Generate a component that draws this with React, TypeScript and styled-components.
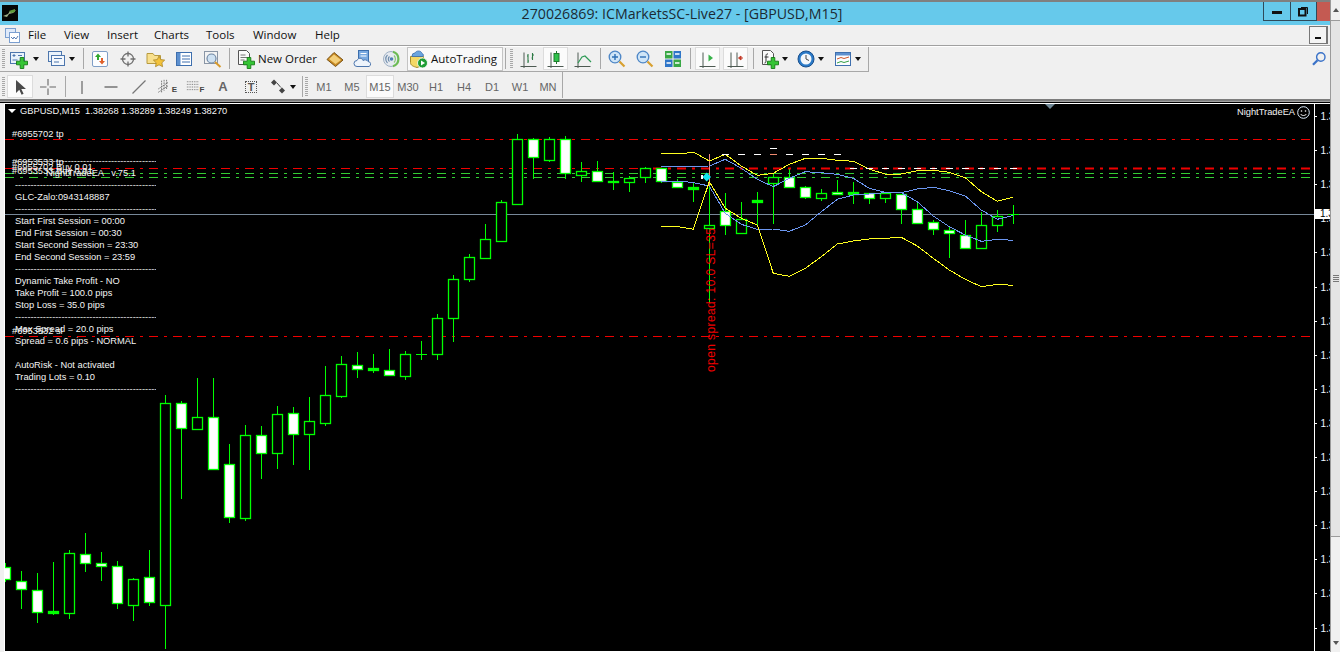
import React from "react";
import styled, { createGlobalStyle } from "styled-components";

const Global = createGlobalStyle`
  html, body { margin: 0; padding: 0; width: 1340px; height: 652px; overflow: hidden; background: #f0f0f0; }
  #root { width: 1340px; height: 652px; }
`;

const Page = styled.div`
  display: flex; width: 1340px; height: 652px; overflow: hidden;
  font-family: "Open Sans", "Liberation Sans", sans-serif;
`;
const Main = styled.div`
  width: 1330px; display: flex; flex-direction: column; background: #f0f0f0;
`;
const TitleBar = styled.div`
  height: 23px; border-top: 2px solid #808080; background: #66c9eb; display: flex; align-items: flex-start;
`;
const Logo = styled.svg`
  width: 16px; height: 16px; margin: 3px 0 0 2px; flex: none;
`;
const TitleText = styled.div`
  flex: 1; margin-left: 83px; text-align: center; font-size: 14.2px; line-height: 23px; color: #1c2a33; white-space: nowrap;
`;
const WinButtons = styled.div`
  display: flex; height: 19px; flex: none;
`;
const WinBtn = styled.div<{ $w: number }>`
  width: ${(p) => p.$w}px; box-sizing: border-box; border: 1px solid #2f4a5a; border-top: none; border-left-width: ${(p) => (p.$w > 27 ? 1 : 0)}px;
  display: flex; align-items: center; justify-content: center;
`;
const CloseBtn = styled.div`
  width: 13px; background: #c45a52;
`;
const MinGlyph = styled.div`
  width: 10px; height: 3px; background: #111; margin-top: 3px;
`;
const MenuBar = styled.div`
  height: 20px; display: flex; align-items: center; font-size: 11.5px; color: #111;
  border-bottom: 1px solid #a0a0a0; position: relative; box-shadow: 0 1px 0 #fff; z-index: 1;
`;
const MenuIcon = styled.svg`
  width: 15px; height: 15px; margin: 0 8px 0 5px; flex: none;
`;
const MenuItem = styled.span<{ $w: number }>`
  width: ${(p) => p.$w}px; flex: none; padding-bottom: 2px;
`;
const MdiMin = styled.div`
  margin-left: auto; margin-right: 2px; width: 19px; height: 18px; box-sizing: border-box;
  border: 1px solid #777; border-right-width: 2px; display: flex; align-items: flex-end; justify-content: center; padding-bottom: 4px; background: #f4f4f4;
`;
const MdiDash = styled.div`
  width: 6px; height: 2px; background: #111;
`;
const ToolRow = styled.div`
  height: 26px; display: flex; justify-content: space-between; align-items: stretch; flex: none;
`;
const Toolbar = styled.div<{ $line?: boolean; $top?: number }>`
  display: flex; align-items: center; border-right: 1px solid #a8a8a8; box-sizing: border-box;
  padding-top: ${(p) => p.$top ?? 0}px;
  border-bottom: ${(p) => (p.$line ? "1px solid #a8a8a8" : "none")};
`;
const Grip = styled.div`
  width: 3px; height: 19px; margin: 0 2px; flex: none;
  background: repeating-linear-gradient(to bottom, #a8a8a8 0 1px, #f0f0f0 1px 2px);
`;
const Sep = styled.div<{ $l?: number; $r?: number }>`
  width: 1px; height: 21px; background: #a8a8a8; flex: none;
  margin: 0 ${(p) => p.$r ?? 2}px 0 ${(p) => p.$l ?? 2}px;
`;
const Slot = styled.div<{ $w: number; $on?: boolean }>`
  width: ${(p) => p.$w}px; height: 23px; box-sizing: border-box; flex: none; display: flex; align-items: center; justify-content: center;
  background: ${(p) => (p.$on ? "#fbfbfb" : "transparent")};
  border: 1px solid ${(p) => (p.$on ? "#dcdcdc" : "transparent")};
`;
const Caret = styled.div`
  width: 10px; flex: none; display: flex; justify-content: center;
  &::after { content: ""; border: 3px solid transparent; border-top: 4px solid #111; border-bottom: 0; }
`;
const Gap = styled.div<{ $w: number }>`
  width: ${(p) => p.$w}px; flex: none;
`;
const LabelBtn = styled.div`
  width: 86px; display: flex; align-items: center; font-size: 11.5px; color: #111; flex: none; padding-left: 4px; box-sizing: border-box;
`;
const AutoBtn = styled.div`
  width: 96px; height: 24px; box-sizing: border-box; border: 1px solid #c4c4c4; background: #f9f9f9; display: flex; align-items: center;
  padding-left: 1px; font-size: 11.5px; color: #111; flex: none;
`;
const BtnText = styled.span`
  margin-left: 2px; white-space: nowrap;
`;
const Period = styled(Slot)`
  font-family: "Liberation Sans", sans-serif; font-size: 11px; color: #666;
`;
const ToolGlyph = styled.span<{ $size: number }>`
  font-family: "Liberation Sans", sans-serif; font-weight: bold; font-size: ${(p) => p.$size}px; color: #666; line-height: 1;
`;
const TBox = styled.span`
  width: 12px; height: 12px; box-sizing: border-box; border: 1px dotted #555; display: flex; align-items: center; justify-content: center;
  font-family: "Liberation Sans", sans-serif; font-weight: bold; font-size: 11px; color: #555;
`;
const SubTool = styled.span`
  display: flex; align-items: flex-end; font-family: "Liberation Sans", sans-serif; font-size: 8px; color: #444; font-weight: bold; line-height: 8px;
`;
const SearchBox = styled.div`
  display: flex; align-items: center; padding-right: 3px;
`;
const Band = styled.div`
  height: 5px; flex: none; background: linear-gradient(to bottom, #f0f0f0 0 1px, #7c7c7c 1px 3px, #a0a0a0 3px 4px, #000 4px 5px);
`;
const ChartWrap = styled.div`
  flex: 1; min-height: 0; margin-left: 4px; border-left: 1px solid #fff; border-top: 1px solid #fff; border-bottom: 1px solid #fff;
  background: #000; position: relative; overflow: hidden;
`;
const ChartSvg = styled.svg`
  display: block; width: 1325px; height: 547px;
`;
const chartFont = `"Liberation Sans", sans-serif`;
const ChartText = styled.div<{ $x: number; $y: number }>`
  position: absolute; left: ${(p) => p.$x - 5}px; top: ${(p) => p.$y - 104 - 6}px; color: #f4f4f4;
  font-family: ${chartFont}; font-size: 9.3px; line-height: 12px; white-space: pre;
`;
const InfoPanel = styled.div`
  position: absolute; left: 10px; top: 51px; width: 150px; color: #f4f4f4;
  font-family: ${chartFont}; font-size: 9.3px; line-height: 12px; white-space: pre;
`;
const InfoLine = styled.div`
  height: 12px; overflow: hidden;
`;
const Rule = styled.div`
  height: 12px; overflow: hidden; width: 141px; color: #e8e8e8;
`;
const HeaderCaret = styled.div`
  position: absolute; left: 3px; top: 5px; border: 4px solid transparent; border-top: 4px solid #fff; border-bottom: 0;
`;
const Notch = styled.div`
  position: absolute; left: 1040px; top: 0; border: 5px solid transparent; border-top: 5px solid #6f8796; border-bottom: 0;
`;
const Smiley = styled.svg`
  position: absolute; left: 1292px; top: 2px; width: 13px; height: 13px;
`;
const PriceBadge = styled.div`
  position: absolute; left: 1310px; top: 105px; width: 15px; height: 10px; background: #fff; color: #000; overflow: hidden;
  font-family: ${chartFont}; font-size: 10px; line-height: 10px; padding-left: 5px; box-sizing: border-box;
`;
const ScrollBar = styled.div`
  width: 10px; flex: none; box-sizing: border-box; border-left: 1px solid #9a9a9a; background: #f0f0f0; display: flex; flex-direction: column; align-items: stretch;
`;
const ScrollArrow = styled.div<{ $up?: boolean }>`
  height: ${(p) => (p.$up ? 20 : 18)}px; display: flex; justify-content: center; align-items: center; flex: none;
  &::after { content: ""; border: 3px solid transparent; ${(p) => (p.$up ? "border-bottom: 4px solid #555; border-top: 0;" : "border-top: 4px solid #555; border-bottom: 0;")} }
`;
const Thumb = styled.div`
  height: 517px; flex: none; box-sizing: border-box; background: #e4e4e4; border: 1px solid #9c9c9c; border-left: none; border-right: none;
  display: flex; align-items: center; justify-content: center;
`;
const ThumbGrip = styled.div`
  width: 6px; height: 7px; background: repeating-linear-gradient(to bottom, #777 0 1px, #e4e4e4 1px 2px);
`;
const Track = styled.div`
  flex: 1;
`;

/* ---------- icons ---------- */
const Ico = styled.svg<{ $s?: number }>`
  width: ${(p) => p.$s ?? 20}px; height: ${(p) => p.$s ?? 20}px; display: block; flex: none;
`;
const Plus = ({ x, y }: { x: number; y: number }) => (
  <path d={`M${x - 1.8} ${y - 5.5}h3.6v3.7h3.7v3.6h-3.7v3.7h-3.6v-3.7h-3.7v-3.6h3.7z`} fill="#35c535" stroke="#157a15" strokeWidth="0.9" />
);
const NewChart = () => (
  <Ico viewBox="0 0 20 20"><rect x="1.5" y="3.5" width="14" height="11" fill="#e9f2fb" stroke="#4d76ad" /><path d="M3.5 6.5h3M5 5v3M9 6.5h4M3.5 11h5" stroke="#4d76ad" /><Plus x={13} y={14} /></Ico>
);
const Profiles = () => (
  <Ico viewBox="0 0 20 20"><rect x="1.5" y="2.5" width="13" height="10" fill="#e9f2fb" stroke="#4d76ad" /><rect x="4.5" y="6.5" width="13" height="10" fill="#f4f8fd" stroke="#4d76ad" /><path d="M7 9.5h8M7 13h5" stroke="#4d76ad" /></Ico>
);
const MarketWatch = () => (
  <Ico viewBox="0 0 20 20"><rect x="2.5" y="2.5" width="15" height="15" rx="1.5" fill="#fcfdff" stroke="#7f9ec6" /><path d="M8 4.5l3 3.5H9v3H7V8H5z" fill="#2fa82f" /><path d="M12 15.5L9 12h2V9h2v3h2z" fill="#e0602a" /></Ico>
);
const Crosshair = () => (
  <Ico viewBox="0 0 20 20"><circle cx="10" cy="10" r="5.5" fill="none" stroke="#6e6e6e" strokeWidth="1.3" /><path d="M10 2.5v5M10 12.5v5M2.5 10h5M12.5 10h5" stroke="#6e6e6e" strokeWidth="1.3" /></Ico>
);
const Favorites = () => (
  <Ico viewBox="0 0 20 20"><path d="M1 4.5h6l1.5 2h6v8H1z" fill="#f8e08e" stroke="#b79a3f" /><path d="M13 7l1.8 3.6 3.9.5-2.8 2.7.7 3.9-3.6-1.9-3.5 1.9.7-3.9-2.8-2.7 3.9-.5z" fill="#f3c23a" stroke="#a9862a" strokeWidth="0.8" /></Ico>
);
const Navigator = () => (
  <Ico viewBox="0 0 20 20"><rect x="2.5" y="3.5" width="15" height="13" fill="#fff" stroke="#3e6fae" /><rect x="3" y="4" width="3.5" height="12" fill="#5d90cf" /><path d="M8 7h8M8 10h8M8 13h8" stroke="#3e6fae" /></Ico>
);
const Tester = () => (
  <Ico viewBox="0 0 20 20"><rect x="1.5" y="2.5" width="13" height="12" fill="#f3f3f3" stroke="#8a96a6" /><circle cx="8.5" cy="9.5" r="4.5" fill="#cfe2f3" stroke="#6f87a3" strokeWidth="1.2" /><path d="M12 13l5.5 5" stroke="#d89a2c" strokeWidth="2" /></Ico>
);
const NewOrder = () => (
  <Ico viewBox="0 0 20 20"><path d="M2.5 1.5h8l3 3v11h-11z" fill="#fbfbfb" stroke="#555" /><path d="M4.5 6h5M4.5 8.5h7M4.5 11h4" stroke="#777" /><Plus x={13} y={14} /></Ico>
);
const Book = () => (
  <Ico viewBox="0 0 20 20"><path d="M2 10.500L9 3.500l9 7.500-7.500 6.500z" fill="#c98a22" stroke="#7a5315" /><path d="M4 10l5-4.500 7 5.500-5.500 4z" fill="#f3cf7a" /></Ico>
);
const CloudDoc = () => (
  <Ico viewBox="0 0 20 20"><rect x="5.5" y="1.5" width="10" height="11" fill="#79a9e0" stroke="#3c6eac" /><path d="M7.5 4.5h6M7.5 7h6" stroke="#fff" /><path d="M4 17.5a3 3 0 0 1 0-6c1-3 5-3 6 0 1-1 4-1 5 1a2.6 2.6 0 0 1 1 5z" fill="#eef4fb" stroke="#4d76ad" /></Ico>
);
const Signal = () => (
  <Ico viewBox="0 0 20 20"><circle cx="10" cy="10" r="7.500" fill="#e6eaf0" stroke="#9fb0c4" /><path d="M6.500 14a5.500 5.500 0 0 1 0-8M8.500 12.500a3.200 3.200 0 0 1 0-5" fill="none" stroke="#6f8cab" strokeWidth="1.200" /><path d="M12 2.800a7.500 7.500 0 0 1 0 14.400" fill="none" stroke="#6dbb55" strokeWidth="2.200" /><path d="M13 6.500a5 5 0 0 1 0 7" fill="none" stroke="#8ac878" strokeWidth="1.200" /><circle cx="10.500" cy="10" r="1.800" fill="#4f7fb5" /></Ico>
);
const AutoIcon = () => (
  <Ico viewBox="0 0 20 20"><path d="M1.5 7.5h13v6c0 3-3 4-6.5 5-3.5-1-6.5-2-6.5-5z" fill="#f3d865" stroke="#a68c2c" /><path d="M3 7a3 3 0 0 1 3-3c1-2.500 6-3 7 .5a2 2 0 0 1 1 3H3z" fill="#6aa4de" stroke="#3c6eac" strokeWidth="0.8" /><circle cx="13.500" cy="14" r="5" fill="#1f9d35" stroke="#fff" strokeWidth="0.8" /><path d="M12 11.500l4 2.500-4 2.500z" fill="#fff" /></Ico>
);
const Axes = () => <path d="M5 3.500v15.500M1.500 17.500h16" stroke="#4d5a52" strokeWidth="1" fill="none" />;
const BarsIcon = () => (
  <Ico viewBox="0 0 20 20"><Axes /><path d="M9 5v9M8 7h1M9 12h1M13.500 4v7M13.500 6h1.500M12.500 9h1" stroke="#2d7a45" strokeWidth="1.100" fill="none" /></Ico>
);
const CandleIcon = () => (
  <Ico viewBox="0 0 20 20"><Axes /><path d="M10.500 2v13" stroke="#1f7a2e" /><rect x="8" y="4.500" width="5" height="8" fill="#2fc24a" stroke="#1f7a2e" /></Ico>
);
const LineIcon = () => (
  <Ico viewBox="0 0 20 20"><Axes /><path d="M5 14l4-6 3-1 3 3 3 3" stroke="#2d9a55" strokeWidth="1.200" fill="none" /></Ico>
);
const Zoomer = ({ plus }: { plus?: boolean }) => (
  <Ico viewBox="0 0 20 20"><circle cx="8" cy="8" r="5.800" fill="#cfe5f7" stroke="#4d86c6" strokeWidth="1.300" /><path d={plus ? "M5 8h6M8 5v6" : "M5 8h6"} stroke="#2d6fb5" strokeWidth="1.400" /><path d="M12.500 12.500l5 5" stroke="#d8a030" strokeWidth="2.200" /></Ico>
);
const Tile = () => (
  <Ico viewBox="0 0 20 20"><rect x="2" y="2" width="7.500" height="7.500" fill="#39a845" /><rect x="10.500" y="2" width="7.500" height="7.500" fill="#2f76c8" /><rect x="2" y="10.500" width="7.500" height="7.500" fill="#2f76c8" /><rect x="10.500" y="10.500" width="7.500" height="7.500" fill="#39a845" /><path d="M3.500 5h4.500M12 5h4.500M3.500 14h4.500M12 14h4.500" stroke="#fff" strokeWidth="1.500" /></Ico>
);
const AutoScroll = () => (
  <Ico viewBox="0 0 20 20"><Axes /><path d="M10.500 5.500l4.500 3.500-4.500 3.500z" fill="#37b34a" /></Ico>
);
const ShiftIcon = () => (
  <Ico viewBox="0 0 20 20"><Axes /><path d="M11 3.500v14" stroke="#4d5a52" /><path d="M17 9h-2M15 7l-2.500 2 2.500 2z" stroke="#c33a28" fill="#c33a28" /></Ico>
);
const Indicators = () => (
  <Ico viewBox="0 0 20 20"><path d="M2.500 1.500h8l3 3v11h-11z" fill="#fbfbfb" stroke="#555" /><path d="M8 5c-2-.5-2 1-2 3v4c0 1.500-.5 2-1.500 2M4.500 8h4" stroke="#333" fill="none" /><Plus x={13} y={14} /></Ico>
);
const ClockIcon = () => (
  <Ico viewBox="0 0 20 20"><circle cx="10" cy="10" r="8" fill="#2a7ac8" stroke="#1a4f8c" /><circle cx="10" cy="10" r="5.500" fill="#f3f7fb" /><path d="M10 6v4l3 1.500" stroke="#444" fill="none" /></Ico>
);
const Template = () => (
  <Ico viewBox="0 0 20 20"><rect x="2.500" y="3.500" width="15" height="13" fill="#fafcff" stroke="#3e6fae" /><rect x="3" y="4" width="14" height="2.500" fill="#5d90cf" /><path d="M4 10l4-1.500 3 1 5-1.500" stroke="#d0562a" fill="none" /><path d="M4 14l4-1.500 3 1 5-1.500" stroke="#37a045" fill="none" /></Ico>
);
const SearchIcon = () => (
  <Ico $s={16} viewBox="0 0 16 16"><circle cx="9.800" cy="6" r="4.200" fill="none" stroke="#3a72c8" strokeWidth="1.400" /><path d="M6.500 9.200L2 13.800" stroke="#3a72c8" strokeWidth="2.200" /></Ico>
);
const CursorIcon = () => (
  <Ico viewBox="0 0 20 20"><path d="M6 3v13l3.300-3.200 2.300 5 2-1-2.300-4.800H16z" fill="#4a4a4a" /></Ico>
);
const CrossThin = () => (
  <Ico viewBox="0 0 20 20"><path d="M10 2v6.500M10 11.500V18M2 10h6.500M11.500 10H18" stroke="#666" strokeWidth="1.100" /></Ico>
);
const VLine = () => (<Ico viewBox="0 0 20 20"><path d="M10 4v13" stroke="#666" strokeWidth="1.200" /></Ico>);
const HLine = () => (<Ico viewBox="0 0 20 20"><path d="M3.500 10h13" stroke="#555" strokeWidth="1.200" /></Ico>);
const Trend = () => (<Ico viewBox="0 0 20 20"><path d="M3.500 16.500L16.500 3.500" stroke="#777" strokeWidth="1.200" /></Ico>);
const Channels = () => (
  <Ico $s={15} viewBox="0 0 15 18"><path d="M0 12L12 4M0 16L12 8M4 2v14M7 1v13M10 1v12" stroke="#555" strokeWidth="0.900" strokeDasharray="2 1" /></Ico>
);
const Fibo = () => (
  <Ico $s={14} viewBox="0 0 14 16"><path d="M0 2h14M0 5h14M0 8h14M0 11h14" stroke="#666" strokeDasharray="1 1" /></Ico>
);
const ArrowsIcon = () => (
  <Ico viewBox="0 0 20 20"><path d="M6 2.500l3 3-3 3-3-3z" fill="#444" /><path d="M14 10.500l3 3-3 3-3-3z" fill="#444" /><path d="M9 6l3 3.500 1 1" stroke="#444" /></Ico>
);

/* ---------- chart data ---------- */
type Kind = "w" | "h" | "d" | "t";
const C: [number, number, number, number, Kind][] = [
  [563, 567, 579, 582, "w"], [571, 581, 589, 609, "w"], [573, 590, 612, 623, "w"], [562, 611, 613, 615, "d"],
  [550, 553, 613, 619, "h"], [533, 554, 563, 572, "w"], [552, 563, 566, 581, "w"], [561, 566, 603, 609, "w"],
  [578, 579, 605, 621, "h"], [550, 577, 602, 606, "w"], [395, 403, 605, 649, "h"], [401, 403, 428, 499, "w"],
  [378, 417, 429, 429, "h"], [378, 417, 469, 469, "w"], [444, 464, 517, 523, "w"], [425, 435, 518, 521, "h"],
  [426, 435, 453, 479, "w"], [406, 414, 453, 469, "h"], [407, 413, 434, 465, "w"], [397, 421, 434, 470, "h"],
  [366, 395, 423, 426, "h"], [356, 364, 396, 398, "h"], [352, 365, 369, 378, "w"], [354, 368, 370, 373, "d"],
  [349, 370, 375, 375, "w"], [351, 354, 376, 380, "h"], [341, 354, 354, 360, "t"], [314, 318, 354, 360, "h"],
  [275, 279, 318, 342, "h"], [254, 257, 279, 282, "h"], [224, 239, 258, 258, "h"], [200, 202, 241, 242, "h"],
  [134, 139, 204, 205, "h"], [138, 139, 157, 179, "w"], [137, 139, 160, 162, "h"], [136, 139, 173, 179, "w"],
  [162, 171, 175, 182, "h"], [161, 171, 181, 181, "w"], [172, 181, 182, 190, "d"], [176, 178, 182, 192, "h"],
  [167, 168, 177, 183, "h"], [168, 168, 181, 183, "w"], [179, 182, 187, 187, "w"], [182, 187, 189, 202, "d"],
  [186, 225, 228, 303, "h"], [193, 211, 225, 235, "w"], [202, 219, 233, 233, "h"], [192, 200, 202, 226, "d"],
  [173, 177, 183, 224, "h"], [169, 177, 187, 187, "w"], [186, 187, 197, 199, "w"], [189, 193, 198, 201, "h"],
  [180, 192, 194, 195, "w"], [182, 192, 194, 204, "d"], [193, 193, 198, 204, "w"], [192, 193, 198, 203, "h"],
  [194, 194, 209, 224, "w"], [202, 209, 223, 224, "w"], [220, 222, 229, 235, "w"], [226, 230, 233, 258, "w"],
  [220, 235, 248, 249, "w"], [212, 225, 248, 248, "h"], [210, 216, 225, 232, "h"], [205, 214, 214, 224, "t"],
];
const zoomPts = (a: number[][]) => a.map(([x, y]) => `${(640 + x / 3).toFixed(1)},${(130 + y / 3).toFixed(1)}`).join(" ");
const yellowUp = zoomPts([[63,70],[135,70],[160,66],[208,93],[256,73],[304,108],[352,136],[400,130],[448,103],[496,85],[544,85],[592,91],[640,94],[688,118],[736,132],[784,132],[832,122],[880,121],[928,127],[976,143],[1024,185],[1072,214],[1118,202]]);
const yellowLow = zoomPts([[63,289],[120,291],[160,298],[208,155],[256,235],[304,265],[352,285],[400,430],[448,439],[496,415],[544,380],[592,342],[640,333],[688,327],[736,325],[784,322],[832,348],[880,385],[928,420],[976,448],[1024,470],[1072,463],[1118,466]]);
const blueUp = zoomPts([[63,110],[208,108],[256,88],[304,115],[352,148],[400,170],[448,145],[496,125],[544,128],[592,133],[640,145],[688,175],[736,187],[784,188],[832,177],[880,172],[928,182],[976,198],[1024,240],[1072,268],[1118,257]]);
const blueLow = zoomPts([[63,155],[135,155],[160,158],[208,168],[256,250],[304,283],[352,298],[400,297],[448,304],[496,285],[544,245],[592,208],[640,195],[688,192],[736,188],[784,188],[832,215],[880,258],[928,290],[976,315],[1024,334],[1072,328],[1118,331]]);
const ticks = [116, 150, 184, 218, 252, 287, 321, 355, 389, 423, 457, 491, 525, 559, 593, 628];
const dashA = "9 6 3 6";
const whiteTop = [722, 738, 754, 770, 786, 802, 818, 834];

const Candles = () => (
  <g>
    {C.map(([hi, top, bot, lo, kind], i) => {
      const x = 5 + 16 * i + 0.5;
      return (
        <g key={i} stroke="#00ff00">
          <path d={`M${x} ${hi}V${lo}`} strokeWidth="1" />
          {kind === "t" ? (
            <path d={`M${x - 5.500} ${top + 0.5}H${x + 5.500}`} strokeWidth="1" />
          ) : (
            <rect x={x - 5} y={top + 0.5} width="10" height={bot - top} strokeWidth="1.300" fill={kind === "w" ? "#fff" : kind === "d" ? "#00ff00" : "#000"} />
          )}
        </g>
      );
    })}
  </g>
);

const Chart = () => (
  <ChartSvg viewBox="5 104 1325 547">
    <path d="M5 139.500H1314" stroke="#f00000" strokeDasharray={dashA} fill="none" />
    <path d="M5 168.500H1314" stroke="#f00000" strokeDasharray={dashA} fill="none" />
    <path d="M653 168.500H1314" stroke="#f00000" strokeWidth="2" strokeDasharray={dashA} fill="none" />
    <path d="M5 173.500H1314M5 177.500H1314" stroke="#33cc33" strokeDasharray={dashA} fill="none" />
    <path d="M5 336.500H1314" stroke="#f00000" strokeDasharray={dashA} fill="none" />
    <path d="M5 214.500H1314" stroke="#778899" fill="none" />
    <Candles />
    <path d="M709.500 154V186" stroke="#f08a80" />
    <polyline points={blueUp} fill="none" stroke="#6b96f0" shapeRendering="crispEdges" />
    <polyline points={blueLow} fill="none" stroke="#6b96f0" shapeRendering="crispEdges" />
    <polyline points={yellowUp} fill="none" stroke="#ffff20" shapeRendering="crispEdges" />
    <polyline points={yellowLow} fill="none" stroke="#ffff20" shapeRendering="crispEdges" />
    {whiteTop.map((x) => (
      <path key={x} d={`M${x} 154.500h7`} stroke={x === 770 ? "#f08a70" : "#fff"} />
    ))}
    <path d="M770 148.500h7" stroke="#fff" />
    {[850, 866, 882, 898, 914, 930, 946, 962, 978, 994, 1010].map((x) => (
      <path key={x} d={`M${x} 168.500h7`} stroke="#fff" />
    ))}
    <path d="M706.700 172.500l4.300 4.500-4.300 4.500-4.300-4.500z" fill="#12e6f0" />
    <path d="M702 175v4" stroke="#fff" strokeWidth="2" />
    <text transform="translate(715 372) rotate(-90)" fill="#f00000" fontFamily={chartFont} fontSize="12" letterSpacing="0.400">open spread: 10.0 SL=35</text>
    <path d="M1314.500 104V651" stroke="#fff" fill="none" />
    {ticks.map((y) => (
      <g key={y}>
        <path d={`M1315 ${y + 0.5}h2`} stroke="#fff" />
        <text x="1320.500" y={y + 4} fill="#eef6ff" fontFamily={chartFont} fontSize="10">1.38</text>
      </g>
    ))}
  </ChartSvg>
);

const rule = "-".repeat(51);
const panel: (string | null)[] = [
  null, "            NightTradeEA   v.75.1", null, "GLC-Zalo:0943148887", null,
  "Start First Session = 00:00", "End First Session = 00:30", "Start Second Session = 23:30", "End Second Session = 23:59", null,
  "Dynamic Take Profit - NO", "Take Profit = 100.0 pips", "Stop Loss = 35.0 pips", null,
  "Max Spread = 20.0 pips", "Spread = 0.6 pips - NORMAL", " ", "AutoRisk - Not activated", "Trading Lots = 0.10", null,
];
const orders: [string, number, number][] = [
  ["#6955702 tp", 12, 134], ["#6953533 tp", 12, 162], ["#6955702 Buy 0.01", 12, 167], ["#6953533 Buy 0.01", 12, 171], ["#6953532 sl", 12, 331],
];
const menus: [string, number][] = [["File", 36], ["View", 43], ["Insert", 47], ["Charts", 52], ["Tools", 47], ["Window", 62], ["Help", 40]];
const periods = ["M1", "M5", "M15", "M30", "H1", "H4", "D1", "W1", "MN"];

export default function App() {
  return (
    <Page>
      <Global />
      <Main>
        <TitleBar>
          <Logo viewBox="0 0 16 16">
            <rect width="16" height="16" fill="#060606" />
            <path d="M1 11l5-2 2-3 6-1-3 3-4 1-2 3z" fill="#9fb08a" />
            <path d="M7 6l6-2v3l-4 1z" fill="#5f9a3a" />
          </Logo>
          <TitleText>270026869: ICMarketsSC-Live27 - [GBPUSD,M15]</TitleText>
          <WinButtons>
            <WinBtn $w={28}><MinGlyph /></WinBtn>
            <WinBtn $w={26}>
              <svg width="11" height="11" viewBox="0 0 11 11"><path d="M3 1.500h6.500V8" fill="none" stroke="#111" /><rect x="1" y="3" width="6.500" height="6.500" fill="none" stroke="#111" strokeWidth="2" /></svg>
            </WinBtn>
            <CloseBtn />
          </WinButtons>
        </TitleBar>
        <MenuBar>
          <MenuIcon viewBox="0 0 15 15">
            <rect x="0.500" y="0.500" width="10" height="9" fill="#dfeafa" stroke="#7b9fd0" />
            <rect x="4.500" y="4.500" width="10" height="10" fill="#fff" stroke="#7b9fd0" />
            <path d="M6 9l2 2 1-2 2 2 2-3" stroke="#5a7fb5" fill="none" />
          </MenuIcon>
          {menus.map(([m, w]) => <MenuItem key={m} $w={w}>{m}</MenuItem>)}
          <MdiMin><MdiDash /></MdiMin>
        </MenuBar>
        <ToolRow>
          <Toolbar $line>
            <Grip />
            <Slot $w={24}><NewChart /></Slot>
            <Caret />
            <Gap $w={5} />
            <Slot $w={21}><Profiles /></Slot>
            <Caret />
            <Sep $l={6} $r={2} />
            <Slot $w={28}><MarketWatch /></Slot>
            <Slot $w={28}><Crosshair /></Slot>
            <Slot $w={28}><Favorites /></Slot>
            <Slot $w={28}><Navigator /></Slot>
            <Slot $w={29}><Tester /></Slot>
            <Sep />
            <LabelBtn><NewOrder /><BtnText>New Order</BtnText></LabelBtn>
            <Gap $w={3} />
            <Slot $w={28}><Book /></Slot>
            <Slot $w={28}><CloudDoc /></Slot>
            <Slot $w={28}><Signal /></Slot>
            <Gap $w={2} />
            <AutoBtn><AutoIcon /><BtnText>AutoTrading</BtnText></AutoBtn>
            <Sep />
            <Grip />
            <Slot $w={27}><BarsIcon /></Slot>
            <Gap $w={1} />
            <Slot $w={25} $on><CandleIcon /></Slot>
            <Gap $w={1} />
            <Slot $w={28}><LineIcon /></Slot>
            <Sep $l={3} />
            <Slot $w={28}><Zoomer plus /></Slot>
            <Slot $w={28}><Zoomer /></Slot>
            <Slot $w={28}><Tile /></Slot>
            <Sep $l={3} />
            <Gap $w={2} />
            <Slot $w={25} $on><AutoScroll /></Slot>
            <Gap $w={3} />
            <Slot $w={25} $on><ShiftIcon /></Slot>
            <Sep $l={5} $r={6} />
            <Slot $w={20}><Indicators /></Slot>
            <Caret />
            <Gap $w={6} />
            <Slot $w={20}><ClockIcon /></Slot>
            <Caret />
            <Gap $w={7} />
            <Slot $w={20}><Template /></Slot>
            <Caret />
            <Gap $w={5} />
          </Toolbar>
          <SearchBox><SearchIcon /></SearchBox>
        </ToolRow>
        <ToolRow>
          <Toolbar $top={3}>
            <Grip />
            <Slot $w={26} $on><CursorIcon /></Slot>
            <Gap $w={1} />
            <Slot $w={28}><CrossThin /></Slot>
            <Sep $l={3} $r={2} />
            <Slot $w={28}><VLine /></Slot>
            <Slot $w={29}><HLine /></Slot>
            <Slot $w={28}><Trend /></Slot>
            <Slot $w={28}><SubTool><Channels />E</SubTool></Slot>
            <Slot $w={28}><SubTool><Fibo />F</SubTool></Slot>
            <Slot $w={28}><ToolGlyph $size={13}>A</ToolGlyph></Slot>
            <Slot $w={28}><TBox>T</TBox></Slot>
            <Gap $w={3} />
            <Slot $w={20}><ArrowsIcon /></Slot>
            <Caret />
            <Sep $l={4} $r={0} />
            <Grip />
            {periods.map((p) => <Period key={p} $w={28} $on={p === "M15"}>{p}</Period>)}
          </Toolbar>
        </ToolRow>
        <Band />
        <ChartWrap>
          <Chart />
          <HeaderCaret />
          <ChartText $x={20} $y={111}>GBPUSD,M15  1.38268 1.38289 1.38249 1.38270</ChartText>
          <Notch />
          <ChartText $x={1237} $y={112}>NightTradeEA</ChartText>
          <Smiley viewBox="0 0 13 13">
            <circle cx="6.500" cy="6.500" r="5.800" fill="none" stroke="#dfefff" />
            <circle cx="4.500" cy="5" r="0.800" fill="#fff" /><circle cx="8.500" cy="5" r="0.800" fill="#fff" />
            <path d="M3.500 8c1.500 2 4.500 2 6 0" fill="none" stroke="#fff" />
          </Smiley>
          <PriceBadge>1.38</PriceBadge>
          {orders.map(([t, x, y]) => <ChartText key={t + y} $x={x} $y={y}>{t}</ChartText>)}
          <InfoPanel>
            {panel.map((l, i) => l === null ? <Rule key={i}>{rule}</Rule> : <InfoLine key={i}>{l}</InfoLine>)}
          </InfoPanel>
        </ChartWrap>
      </Main>
      <ScrollBar>
        <ScrollArrow $up />
        <Thumb><ThumbGrip /></Thumb>
        <Track />
        <ScrollArrow />
      </ScrollBar>
    </Page>
  );
}
